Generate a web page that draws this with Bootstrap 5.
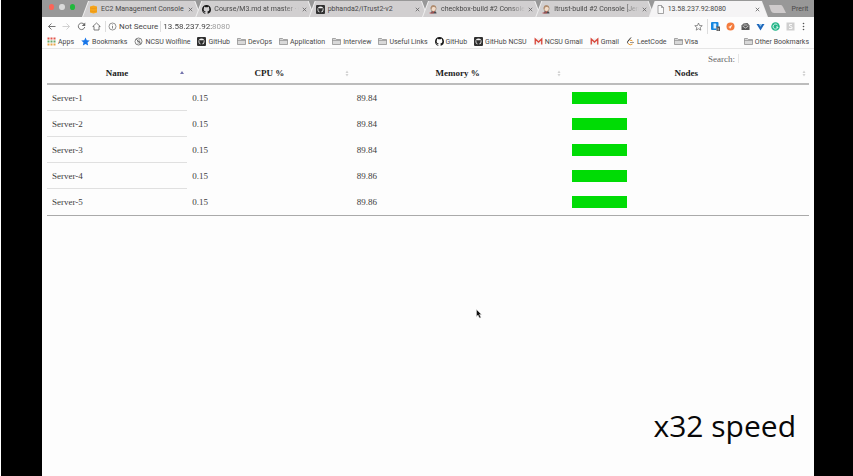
<!DOCTYPE html>
<html lang="en">
<head>
<meta charset="utf-8">
<meta name="viewport" content="width=device-width, initial-scale=1">
<title>13.58.237.92:8080</title>
<link href="https://cdn.jsdelivr.net/npm/bootstrap@5.3.0/dist/css/bootstrap.min.css" rel="stylesheet">
<style>
body{background:#000;border-left:1px solid #fff;font-family:Roboto,sans-serif;font-size:7px;line-height:10px;color:#444}
.frame{min-height:100vh;padding-left:41px;padding-right:39px}
.window{background:#fdfdfd;color:#484848}
svg{display:block;flex:none}
button,input{font:inherit;color:inherit;background:none;border:0;padding:0;margin:0;outline-offset:0}
a{color:inherit;text-decoration:none}
.ic{width:9px;height:9px}
/* tab strip */
.strip{background:#989898;height:17px;padding:1px 0 0 7px}
.light{width:6px;height:6px;border-radius:50%}
.red{background:#fb6458}.grey{background:#dadada}.green{background:#20b83c}
.lights{gap:5px;padding-right:7px;width:33px}
.tabs{margin-right:1px}
.tab{min-width:0;flex:1 1 0;height:16px;margin-right:-6px;background:#f0f0f0;clip-path:polygon(6px 0,calc(100% - 6px) 0,100% 100%,0 100%)}
.tab:last-child{margin-right:0}
.tab-in{height:100%;gap:3px;padding:0 8px 0 7px;background:#d1cfd0;clip-path:polygon(7px 0,calc(100% - 7px) 0,calc(100% - 1px) 100%,1px 100%)}
.active .tab-in{background:#f5f4f5}
.tab-title{min-width:0;white-space:nowrap}
.fade-end{-webkit-mask-image:linear-gradient(90deg,#000 82%,transparent);mask-image:linear-gradient(90deg,#000 82%,transparent)}
.tab-x{width:5px}
.profile{width:28px}
/* toolbar */
.tools{height:19px;padding:0 8px 0 5px;font-size:8px}
.tools-nav{gap:6px}
.tools-ext{gap:6px}
.sep{width:1px;height:11px;background:#ddd;flex:none}
.star-sep{height:15px;margin:0 -3px 0 -2px}
.addr{gap:2px;padding-left:4px}
.addr-url{width:100%;background:linear-gradient(90deg,#3c3c3c 49px,#999 49px);-webkit-background-clip:text;background-clip:text;-webkit-text-fill-color:transparent}
.menu-dots{width:5px}
/* bookmarks */
.marks{height:13px;padding:0 5px 1px;border-bottom:1px solid #e6e6e6;gap:7px;white-space:nowrap}
.mark-link{gap:2px}
/* page */
.page{font-family:"Liberation Serif",serif;font-size:9px;line-height:12px;padding:3px 5px 0;color:#3c3c3c}
.find{gap:3px;color:#666;height:13px}
.find input{width:71px;height:9px;border-left:1px solid #e6e6e6}
.servers{table-layout:fixed;width:100%;border-collapse:separate;border-spacing:0;border-bottom:1px solid #aaa}
.servers th{height:20px;padding:0 3px 2px;border-bottom:2px solid #bcbcbc;color:#1c1c1c;vertical-align:middle}
.servers td{height:26px;padding:0 5px;vertical-align:middle}
.servers tbody tr:not(:last-child) td:first-child{border-bottom:1px solid #e0e0e0}
.c-name{width:18.4%}.c-cpu{width:21.6%}.c-mem{width:27.8%}
.sorter{font-weight:bold;width:100%;display:grid;grid-template-columns:4px 1fr 4px;align-items:center}
.sorter span{grid-column:2}
.node{width:55px;height:12px;background:#00dc05;margin-left:3px}
.pointer{position:absolute;left:434px;top:309px}
.speed{position:absolute;right:18px;bottom:29px;font-family:"Open Sans",sans-serif;font-size:30px;line-height:42px;color:#080808}
</style>
</head>
<body>
<svg width="0" height="0" class="position-absolute" aria-hidden="true">
<defs>
<symbol id="folder" viewBox="0 0 18 18"><path d="M1 15V3h6l2 2h8v10z" fill="#d9d9d9" stroke="#858585" stroke-width="1.4"/><path d="M1 7h16" stroke="#858585" stroke-width="1.2"/></symbol>
<symbol id="gh" viewBox="0 0 16 16"><path fill="#181818" d="M8 0C3.58 0 0 3.58 0 8c0 3.54 2.29 6.53 5.47 7.59.4.07.55-.17.55-.38v-1.49c-2.23.49-2.7-.94-2.7-.94-.36-.93-.89-1.17-.89-1.17-.73-.5.05-.49.05-.49.81.06 1.23.83 1.23.83.72 1.23 1.88.87 2.34.67.07-.52.28-.87.51-1.07-1.78-.2-3.64-.89-3.64-3.95 0-.87.31-1.59.82-2.15-.08-.2-.36-1.02.08-2.12 0 0 .67-.21 2.2.82a7.6 7.6 0 0 1 4 0c1.53-1.04 2.2-.82 2.2-.82.44 1.1.16 1.92.08 2.12.51.56.82 1.27.82 2.15 0 3.07-1.87 3.75-3.65 3.95.29.25.54.73.54 1.48v2.19c0 .21.15.46.55.38A8 8 0 0 0 16 8c0-4.42-3.58-8-8-8z"/></symbol>
<symbol id="ghbox" viewBox="0 0 18 18"><rect width="18" height="18" rx="2" fill="#303030"/><path d="M9 3a6 6 0 0 0-6 6c0 3 1.500 5 4 6v-2c-1.500 0-2-1-2.500-1.500 1 0 1.500 1 2.500 1-2-.7-2.600-2-2.300-4L4.500 5.500l2.500 1h4l2.500-1L13.300 8.500c.3 2-.3 3.300-2.300 4V15c2.500-1 4-3 4-6a6 6 0 0 0-6-6z" fill="#f2f2f2"/></symbol>
<symbol id="gmail" viewBox="0 0 18 18"><path d="M1 3h16v12H1z" fill="#f1eeee"/><path d="M2.500 15V4L9 10l6.500-6v11" fill="none" stroke="#d9483b" stroke-width="2.600"/></symbol>
<symbol id="jenkins" viewBox="0 0 18 18"><path d="M3 17c0-4 3-5 6-5s6 1 6 5z" fill="#494b50"/><path d="M7 12h4l-2 4z" fill="#d33"/><ellipse cx="9" cy="7" rx="5.200" ry="6" fill="#f2dcc8" stroke="#8b6a4e"/><path d="M3.500 7C3 1 7 0 10 1c3 0 5 2 4 5-2-2-6-3-8-1l-1 4z" fill="#b08d70"/><path d="M1 15h8v2H1z" fill="#c66"/></symbol>
<symbol id="x" viewBox="0 0 10 10"><path d="M1.500 1.500l7 7m0-7l-7 7" stroke="#626262" stroke-width="1.600"/></symbol>
<symbol id="both" viewBox="0 0 8 14"><path d="M1 6l3-5 3 5zM1 8l3 5 3-5z" fill="#d2d2d2"/></symbol>
</defs>
</svg>
<div class="frame d-flex">
<div class="window flex-grow-1 position-relative">
<header>
<div class="strip d-flex">
  <div class="lights d-flex align-items-center pb-1" aria-hidden="true"><span class="light red"></span><span class="light grey"></span><span class="light green"></span></div>
  <nav class="tabs d-flex flex-grow-1" aria-label="Tabs">
    <div class="tab"><div class="tab-in d-flex align-items-center"><svg class="ic" viewBox="0 0 18 18"><path d="M2 3l7-2 7 2v12l-7 2-7-2z" fill="#f6a51c"/><path d="M2 6l7 1 7-1M2 12l7 1 7-1" stroke="#e28c0c" fill="none"/></svg><a class="tab-title flex-grow-1" href="#">EC2 Management Console</a><button aria-label="Close tab"><svg class="tab-x" height="5"><use href="#x"/></svg></button></div></div>
    <div class="tab"><div class="tab-in d-flex align-items-center"><svg class="ic"><use href="#gh"/></svg><a class="tab-title fade-end flex-grow-1" href="#">Course/M3.md at master · C</a><button aria-label="Close tab"><svg class="tab-x" height="5"><use href="#x"/></svg></button></div></div>
    <div class="tab"><div class="tab-in d-flex align-items-center"><svg class="ic"><use href="#ghbox"/></svg><a class="tab-title flex-grow-1" href="#">pbhanda2/iTrust2-v2</a><button aria-label="Close tab"><svg class="tab-x" height="5"><use href="#x"/></svg></button></div></div>
    <div class="tab"><div class="tab-in d-flex align-items-center"><svg class="ic"><use href="#jenkins"/></svg><a class="tab-title fade-end flex-grow-1" href="#">checkbox-build #2 Console</a><button aria-label="Close tab"><svg class="tab-x" height="5"><use href="#x"/></svg></button></div></div>
    <div class="tab"><div class="tab-in d-flex align-items-center"><svg class="ic"><use href="#jenkins"/></svg><a class="tab-title fade-end flex-grow-1" href="#">itrust-build #2 Console [Jen</a><button aria-label="Close tab"><svg class="tab-x" height="5"><use href="#x"/></svg></button></div></div>
    <div class="tab active"><div class="tab-in d-flex align-items-center"><svg class="ic" viewBox="0 0 18 18"><path d="M4 1h7l4 4v12H4zM11 1v4h4" fill="#fafafa" stroke="#777" stroke-width="1.300"/></svg><a class="tab-title flex-grow-1" href="#" aria-current="page">13.58.237.92:8080</a><button aria-label="Close tab"><svg class="tab-x" height="5"><use href="#x"/></svg></button></div></div>
  </nav>
  <button class="align-self-center" aria-label="New tab"><svg width="17" height="8" viewBox="0 0 17 8"><path d="M0 0h12q1 0 2 2l3 6H5Q3 8 2 6z" fill="#cfcbcc"/></svg></button>
  <button class="profile">Prerit</button>
</div>
<div class="tools d-flex align-items-center">
  <div class="tools-nav d-flex align-items-center">
    <button aria-label="Back"><svg class="ic" viewBox="0 0 18 18"><path d="M17 9H3m6-6L3 9l6 6" fill="none" stroke="#666" stroke-width="1.800"/></svg></button>
    <button aria-label="Forward"><svg class="ic" viewBox="0 0 18 18"><path d="M1 9h14M9 3l6 6-6 6" fill="none" stroke="#ccc" stroke-width="1.800"/></svg></button>
    <button aria-label="Reload"><svg class="ic" viewBox="0 0 18 18"><path d="M14.500 5A6.500 6.500 0 1 0 15.500 10" fill="none" stroke="#666" stroke-width="1.800"/><path d="M16.500 1v7h-7z" fill="#666"/></svg></button>
    <button aria-label="Home"><svg class="ic" viewBox="0 0 18 18"><path d="M1.500 9L9 2l7.500 7H14v7H4V9z" fill="none" stroke="#666" stroke-width="1.700"/></svg></button>
  </div>
  <form class="addr d-flex align-items-center flex-grow-1" onsubmit="return false">
    <span class="sep"></span>
    <svg class="ic" viewBox="0 0 18 18"><circle cx="9" cy="9" r="7" fill="none" stroke="#666" stroke-width="1.400"/><path d="M9 8v5M9 5v1.500" stroke="#666" stroke-width="1.600"/></svg>
    <label for="url" class="text-nowrap">Not Secure</label><span class="sep"></span>
    <input class="addr-url" id="url" type="text" value="13.58.237.92:8080">
  </form>
  <div class="tools-ext d-flex align-items-center">
    <button aria-label="Bookmark this page"><svg class="ic" viewBox="0 0 18 18"><path d="M9 2l2 5 5.500.4-4.200 3.600 1.300 5.300L9 13.500l-4.600 2.800L5.700 11 1.500 7.400 7 7z" fill="none" stroke="#666" stroke-width="1.400"/></svg></button>
    <span class="sep star-sep"></span>
    <button aria-label="Extension 1"><svg class="ic" viewBox="0 0 18 18"><rect width="15" height="16" rx="2" fill="#1587e0"/><path d="M5 3h5l1 3-1 2 1 3-1 2H5z" fill="#d9efff"/><rect x="11" y="9" width="7" height="9" fill="#555"/><path d="M12 17v-6m3 6v-5" stroke="#eee"/></svg></button>
    <button aria-label="Extension 2"><svg class="ic" viewBox="0 0 18 18"><circle cx="9" cy="9" r="8" fill="#f47b3d"/><path d="M4 10l3-1 6-4-3 6-2 3-1-3z" fill="#fff3e8"/></svg></button>
    <button aria-label="Extension 3"><svg class="ic" viewBox="0 0 18 18"><path d="M1 7l4-4 8-1 4 5v9H1z" fill="#555"/><path d="M3 8l6 4 6-4M5 6h8" fill="none" stroke="#eee" stroke-width="1.500"/></svg></button>
    <button aria-label="Extension 4"><svg class="ic" viewBox="0 0 18 18"><path d="M1 4h5l3 5 3-5h5L9 17z" fill="#1e67bb"/><path d="M6 4h6L9 9z" fill="#8bc5ee"/></svg></button>
    <button aria-label="Extension 5"><svg class="ic" viewBox="0 0 18 18"><circle cx="9" cy="9" r="8.500" fill="#20b587"/><path d="M13 6a5 5 0 1 0 1 4h-4" fill="none" stroke="#fff" stroke-width="1.700"/></svg></button>
    <button aria-label="Extension 6"><svg class="ic" viewBox="0 0 18 18"><rect x="1" y="1" width="16" height="16" fill="#cfcfcf"/><path d="M12 5H7v3l5 2v3H6" fill="none" stroke="#f8f8f8" stroke-width="2"/></svg></button>
    <button aria-label="Menu"><svg class="menu-dots" height="9" viewBox="0 0 10 18"><g fill="#555"><circle cx="5" cy="3" r="1.600"/><circle cx="5" cy="9" r="1.600"/><circle cx="5" cy="15" r="1.600"/></g></svg></button>
  </div>
</div>
<nav class="marks d-flex align-items-center" aria-label="Bookmarks">
  <a class="mark-link d-flex align-items-center" href="#"><svg class="ic" viewBox="0 0 18 18"><path d="M1 3h4m2 0h4m2 0h4" stroke="#e2574c" stroke-width="4"/><path d="M1 9h4m2 0h4m2 0h4" stroke="#69a96b" stroke-width="4"/><path d="M1 15h4m2 0h4m2 0h4" stroke="#e8a64b" stroke-width="4"/></svg>Apps</a>
  <a class="mark-link d-flex align-items-center" href="#"><svg class="ic" viewBox="0 0 18 18"><path d="M9 1l2.500 5.700 6 .5-4.500 4 1.300 6L9 14l-5.300 3.200 1.300-6-4.500-4 6-.5z" fill="#1976e8"/></svg>Bookmarks</a>
  <a class="mark-link d-flex align-items-center" href="#"><svg class="ic" viewBox="0 0 18 18"><circle cx="9" cy="9" r="7" fill="none" stroke="#666" stroke-width="1.600"/><path d="M4 4l10 10M12 6H7v3h5v3H7" fill="none" stroke="#666" stroke-width="1.400"/></svg>NCSU Wolfline</a>
  <a class="mark-link d-flex align-items-center" href="#"><svg class="ic"><use href="#ghbox"/></svg>GitHub</a>
  <a class="mark-link d-flex align-items-center" href="#"><svg class="ic"><use href="#folder"/></svg>DevOps</a>
  <a class="mark-link d-flex align-items-center" href="#"><svg class="ic"><use href="#folder"/></svg>Application</a>
  <a class="mark-link d-flex align-items-center" href="#"><svg class="ic"><use href="#folder"/></svg>Interview</a>
  <a class="mark-link d-flex align-items-center" href="#"><svg class="ic"><use href="#folder"/></svg>Useful Links</a>
  <a class="mark-link d-flex align-items-center" href="#"><svg class="ic"><use href="#gh"/></svg>GitHub</a>
  <a class="mark-link d-flex align-items-center" href="#"><svg class="ic"><use href="#ghbox"/></svg>GitHub NCSU</a>
  <a class="mark-link d-flex align-items-center" href="#"><svg class="ic"><use href="#gmail"/></svg>NCSU Gmail</a>
  <a class="mark-link d-flex align-items-center" href="#"><svg class="ic"><use href="#gmail"/></svg>Gmail</a>
  <a class="mark-link d-flex align-items-center" href="#"><svg class="ic" viewBox="0 0 18 18"><path d="M10 1L4 8q-2 3 0 5" fill="none" stroke="#333" stroke-width="2"/><path d="M4 13q4 5 9 1M7 7q3-2 6 1" fill="none" stroke="#e99b32" stroke-width="2"/><path d="M8 11h8" stroke="#999" stroke-width="2"/></svg>LeetCode</a>
  <a class="mark-link d-flex align-items-center" href="#"><svg class="ic"><use href="#folder"/></svg>Visa</a>
  <a class="mark-link d-flex align-items-center ms-auto" href="#"><svg class="ic"><use href="#folder"/></svg>Other Bookmarks</a>
</nav>
</header>
<main class="page">
  <div class="find d-flex justify-content-end align-items-center"><label for="q">Search:</label><input id="q" type="search"></div>
  <table class="servers">
    <colgroup><col class="c-name"><col class="c-cpu"><col class="c-mem"><col></colgroup>
    <thead><tr>
      <th scope="col" aria-sort="ascending"><button class="sorter"><span>Name</span><svg width="4" height="7" viewBox="0 0 8 14"><path d="M0 8l4-6 4 6z" fill="#7474ad"/></svg></button></th>
      <th scope="col"><button class="sorter"><span>CPU %</span><svg width="4" height="7"><use href="#both"/></svg></button></th>
      <th scope="col"><button class="sorter"><span>Memory %</span><svg width="4" height="7"><use href="#both"/></svg></button></th>
      <th scope="col"><button class="sorter"><span>Nodes</span><svg width="4" height="7"><use href="#both"/></svg></button></th>
    </tr></thead>
    <tbody>
      <tr><td>Server-1</td><td>0.15</td><td>89.84</td><td><div class="node"></div></td></tr>
      <tr><td>Server-2</td><td>0.15</td><td>89.84</td><td><div class="node"></div></td></tr>
      <tr><td>Server-3</td><td>0.15</td><td>89.84</td><td><div class="node"></div></td></tr>
      <tr><td>Server-4</td><td>0.15</td><td>89.86</td><td><div class="node"></div></td></tr>
      <tr><td>Server-5</td><td>0.15</td><td>89.86</td><td><div class="node"></div></td></tr>
    </tbody>
  </table>
</main>
<svg class="pointer" width="6" height="10" viewBox="0 0 12 20" aria-hidden="true"><path d="M1 1v14l3-3 3 6 3-1-3-6h4z" fill="#111" stroke="#ddd"/></svg>
<div class="speed">x32 speed</div>
</div>
</div>
<script src="https://cdn.jsdelivr.net/npm/bootstrap@5.3.0/dist/js/bootstrap.bundle.min.js"></script>
</body>
</html>
